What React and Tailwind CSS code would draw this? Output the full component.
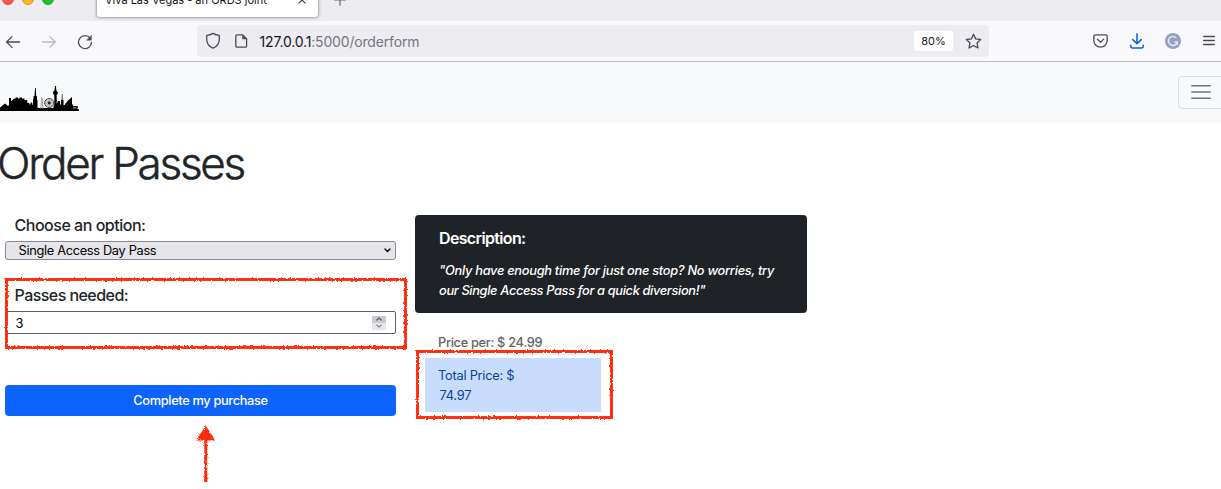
import React from "react";

const Icon = ({ className = "", children, w = 16, h = 16, sw = 1.3 }) => (
  <svg
    className={"block shrink-0 " + className}
    width={w}
    height={h}
    viewBox={`0 0 ${w} ${h}`}
    fill="none"
    stroke="currentColor"
    strokeWidth={sw}
    strokeLinecap="round"
    strokeLinejoin="round"
  >
    {children}
  </svg>
);

function TabStrip() {
  return (
    <div className="flex h-[21px] items-start overflow-hidden bg-[#edecf1]">
      <div className="-mt-[7px] flex gap-[8px] pl-[2px]">
        <span className="size-[12px] rounded-full border border-[#e2453c] bg-[#fe5850]" />
        <span className="size-[12px] rounded-full border border-[#e09b1a] bg-[#feb429]" />
        <span className="size-[12px] rounded-full border border-[#17a52a] bg-[#22c231]" />
      </div>
      <div className="-mt-[14px] ml-[42px] flex h-[32px] w-[223px] items-center rounded-[4px] border border-[#b9b8c2] bg-white pl-[8px] shadow-[0_0_3px_rgba(90,90,110,0.45)]">
        <span className="mt-[-4px] w-[190px] whitespace-nowrap text-[11px] leading-[16px] tracking-[0px] text-[#15141a]">
          Viva Las Vegas - an ORDS joint
        </span>
        <Icon w={8} h={8} sw={1.1} className="-mt-[4px] ml-[3px] text-[#3a3944]">
          <path d="M.8.8l6.4 6.4M7.2.8L.8 7.2" />
        </Icon>
      </div>
      <Icon w={12} h={12} sw={1.2} className="-mt-[6px] ml-[15px] text-[#6a6973]">
        <path d="M6 .8v10.4M.8 6h10.4" />
      </Icon>
    </div>
  );
}

function Toolbar() {
  return (
    <div className="flex h-[41px] items-center border-b border-[#bdbcc5] bg-[#f9f9fb] text-[#4b4a56]">
      <Icon w={16} h={14} className="ml-[5px] mt-[1px]">
        <path d="M14.6 7H1.6M7 1.6L1.5 7 7 12.4" />
      </Icon>
      <Icon w={16} h={14} className="ml-[20px] mt-[1px] text-[#bbbac1]">
        <path d="M1.2 7h13M8.8 1.6L14.3 7l-5.5 5.4" />
      </Icon>
      <Icon w={16} h={16} className="ml-[20px] mt-[1px]">
        <path d="M13.2 4.200A6.500 6.500 0 1 0 14.500 8.300" />
        <path d="M14.4 1.600v4.600H9.800z" fill="currentColor" strokeWidth=".5" />
      </Icon>
      <div className="ml-[104px] flex h-[32px] w-[792px] items-center rounded-[4px] bg-[#edecf1]">
        <Icon w={16} h={18} className="ml-[8px]">
          <path d="M8 1.4c1.9 1.2 4 1.9 6.3 2v3.5c0 4.4-2.4 7.7-6.3 9.3-3.900-1.600-6.300-4.900-6.300-9.300V3.400C4 3.300 6.100 2.600 8 1.400z" />
        </Icon>
        <Icon w={13} h={14} className="ml-[14px]">
          <path d="M2 .9h5.700l3.900 3.900v7.100a1.200 1.200 0 0 1-1.200 1.200H2A1.200 1.200 0 0 1 .8 11.900V2.100A1.200 1.200 0 0 1 2 .9z" />
          <path d="M7.600 1v3.900h3.900z" fill="currentColor" strokeWidth=".6" />
        </Icon>
        <div className="ml-[11.500px] mt-[2px] flex-1 whitespace-nowrap text-[14px] leading-[20px] tracking-[-0.17px] text-[#77767e]">
          <span className="text-[#15141a]">127.0.0.1</span>:5000/orderform
        </div>
        <div className="flex h-[20px] w-[39px] items-center justify-center rounded-[3px] bg-white text-[11px] text-[#15141a]">
          80%
        </div>
        <Icon w={17} h={17} className="ml-[12px] mr-[7px]">
          <path d="M8.500 1.300l2.150 4.600 5.050.6-3.700 3.450.95 5-4.450-2.450-4.450 2.450.95-5L1.300 6.500l5.050-.6z" />
        </Icon>
      </div>
      <Icon w={15} h={14} className="ml-[104px]">
        <path d="M2.200.9h10.600a1.400 1.400 0 0 1 1.400 1.400v4.200a6.700 6.700 0 0 1-13.400 0V2.300A1.400 1.400 0 0 1 2.200.9zM4.300 5.100l3.200 3.100 3.200-3.100" />
      </Icon>
      <Icon w={14} h={16} sw={1.500} className="ml-[21.500px] text-[#0a5fe0]">
        <path d="M7 .8v9.800M2.700 6.600L7 10.800l4.300-4.200M.8 12.300v1.200a1.400 1.400 0 0 0 1.400 1.400h9.600a1.400 1.400 0 0 0 1.400-1.400v-1.200" />
      </Icon>
      <Icon w={16} h={16} sw={1.500} className="ml-[21.500px]">
        <circle cx="8" cy="8" r="8" fill="#969fbf" stroke="none" />
        <path d="M11.200 4.800A4.500 4.500 0 1 0 12.300 9H9.200M12.300 9v2.800" stroke="#e3e6f0" strokeLinecap="butt" />
      </Icon>
      <Icon w={12} h={12} sw={1.300} className="ml-[22px]">
        <path d="M.6 1.500h10.800M.6 5.500h10.800M.6 9.500h10.800" />
      </Icon>
    </div>
  );
}

function Skyline() {
  return (
    <svg className="block" width="79" height="26" viewBox="0 0 79 26">
      <path
        fill="#000"
        d="M0 25V21.500L5 17.500L8 20L9 19V12H11V15L13 14V13L15.500 12.500V11.500H18V12.500H19.500V11.500H22V12.500H24.500V14H27L27.500 17H29L30 19L31 16.500H32L32.500 19H33V13H33.500V10H34.500L35 2H35.700L36.200 10H37V14H37.500V21.500L39 22H53.500V20L54.300 19V9L53 7.500V6L54.500 4.500L55 0H56L56.300 4.500L57.700 6V7.500L56.700 9V18L58 15H60V18.500H61V14L61.800 13.500V8H62.500V13.500L63.500 14V19H65V17.500H66L67 15.500L72 11V18.500H73V20H77.500L78 21.500L77 22.500L79 23.500V25Z"
      />
      <path d="M40.800 22.500l1-11 1.200 11" stroke="#a0a0a0" strokeWidth="1" fill="none" />
      <circle cx="49.200" cy="17" r="4.500" fill="#dcdee0" stroke="#444" strokeWidth="1" />
      <path d="M45 17h8.400M49.200 12.800v8.400M46.200 14l6 6M52.200 14l-6 6" stroke="#777" strokeWidth=".6" />
      <circle cx="49.200" cy="17" r="1.400" fill="#222" />
      <path d="M73 22h3.500" stroke="#bbb" strokeWidth="1" />
    </svg>
  );
}

function NavBar() {
  return (
    <div className="flex h-[61px] items-center justify-between overflow-hidden bg-[#f8f9fa]">
      <div className="mt-[13px]">
        <Skyline />
      </div>
      <div className="-mr-[4px] flex h-[33px] w-[47px] items-center justify-center rounded-[4px] border border-[#dcddde]">
        <Icon w={20} h={16} sw={1.500} className="-mt-[1px] mr-[1px] text-[#717274]">
          <path d="M.8 1.700h18.400M.8 8h18.400M.8 14.300h18.400" />
        </Icon>
      </div>
    </div>
  );
}

/* Hand-drawn marker outline laid over the element that holds it. */
function Scribble({ className, w, h }) {
  return (
    <svg className={"pointer-events-none absolute overflow-visible " + className} width={w} height={h}>
      <rect
        x="1.500"
        y="1.500"
        width={w - 3}
        height={h - 3}
        fill="none"
        stroke="#ff2a0a"
        strokeWidth="2.900"
        filter="url(#chalk)"
      />
    </svg>
  );
}

function OrderColumn() {
  return (
    <div className="flex w-[391px] flex-col">
      <div className="pl-[9.500px] text-[16px] font-medium leading-[20px] tracking-[-0.48px]">Choose an option:</div>
      <div className="mt-[6px] flex h-[19px] items-center justify-between rounded-[3px] border border-[#8a8996] bg-[#e6e5ea] pl-[12.500px] pr-[4px] text-[12.800px] leading-[17px] text-black">
        <span className="tracking-[-0.320px]">Single Access Day Pass</span>
        <Icon w={7} h={5} sw={1.500} className="text-[#111]">
          <path d="M1 1l2.500 2.500L6 1" />
        </Icon>
      </div>
      <div className="relative mt-[25px] flex flex-col">
        <div className="pl-[9.500px] text-[16px] font-medium leading-[20px] tracking-[-0.55px]">Passes needed:</div>
        <div className="mt-[6px] flex h-[23px] items-center justify-between rounded-[2px] border border-[#5d5c69] bg-white pl-[9.500px] pr-[9px] text-[12.800px] text-black">
          <span className="mt-[2px]">3</span>
          <span className="flex h-[14px] w-[14px] flex-col bg-[#e6e5ea] text-[#5d5c69]">
            <span className="flex h-[7px] items-center justify-center bg-[#cbcad2]">
              <Icon w={6} h={4} sw={1.300}>
                <path d="M.8 3L3 1l2.200 2" />
              </Icon>
            </span>
            <span className="flex h-[7px] items-center justify-center text-[#8c8b96]">
              <Icon w={6} h={4} sw={1.300}>
                <path d="M.8 1L3 3l2.200-2" />
              </Icon>
            </span>
          </span>
        </div>
        <Scribble className="left-0 -top-[7.500px]" w={402} h={71} />
      </div>
      <button className="mt-[51px] h-[31px] rounded-[4px] bg-[#0d63fd] pt-[1px] text-[12.800px] font-medium leading-[20px] tracking-[-0.340px] text-white">
        Complete my purchase
      </button>
      <svg className="ml-[189.500px] mt-[9px] block overflow-visible" width="20" height="58" viewBox="0 0 20 58">
        <g filter="url(#chalk)">
          <path d="M10.800 14v43" stroke="#ff2a0a" strokeWidth="3" />
          <path d="M10.800 .5L20 15.500H1.300z" fill="#ff2a0a" />
        </g>
      </svg>
    </div>
  );
}

function DetailColumn() {
  return (
    <div className="ml-[19px] flex w-[392px] flex-col">
      <div className="h-[98px] rounded-[4px] bg-[#1f2327] pl-[24px] pt-[13px] text-white">
        <div className="text-[16px] font-semibold leading-[20px] tracking-[-0.65px]">Description:</div>
        <p className="mt-[13px] whitespace-nowrap text-[12.800px] font-medium italic leading-[20px] tracking-[-0.28px]">
          "Only have enough time for just one stop? No worries, try
          <br />
          <span className="tracking-[-0.340px]">our Single Access Pass for a quick diversion!"</span>
        </p>
      </div>
      <div className="relative ml-[10px] mt-[10px] w-[176px] text-[12.800px] leading-[20px]">
        <div className="h-[35px] whitespace-pre bg-[#fefefe] pl-[13px] pt-[10px] font-medium tracking-[-0.310px] text-[#636464]">
          Price per: $ 24.99
        </div>
        <div className="flex h-[54px] flex-col bg-[#c8ddfe] pl-[13px] pt-[8px] tracking-[-0.240px] text-[#084298]">
          <span>Total Price: $</span>
          <span className="pl-[1.500px]">74.97</span>
        </div>
        <Scribble className="-left-[9.500px] top-[26.500px]" w={197} h={69} />
      </div>
    </div>
  );
}

export default function App() {
  return (
    <div className="h-[489px] w-[1221px] overflow-hidden bg-white font-['Inter','Liberation_Sans',sans-serif] text-[#212529]">
      <svg className="absolute size-0">
        <filter id="chalk" x="-5%" y="-5%" width="110%" height="110%" filterUnits="objectBoundingBox">
          <feTurbulence type="fractalNoise" baseFrequency="0.45" numOctaves="2" seed="4" result="n" />
          <feDisplacementMap in="SourceGraphic" in2="n" xChannelSelector="R" yChannelSelector="G" scale="3" />
        </filter>
      </svg>
      <TabStrip />
      <Toolbar />
      <NavBar />
      <h1 className="ml-[-3px] mt-[14px] text-[44px] font-light leading-[53px] tracking-[-2.25px] [-webkit-text-stroke:0.5px_#212529]">
        Order Passes
      </h1>
      <div className="flex items-start pl-[5px] pt-[25px]">
        <OrderColumn />
        <DetailColumn />
      </div>
    </div>
  );
}
